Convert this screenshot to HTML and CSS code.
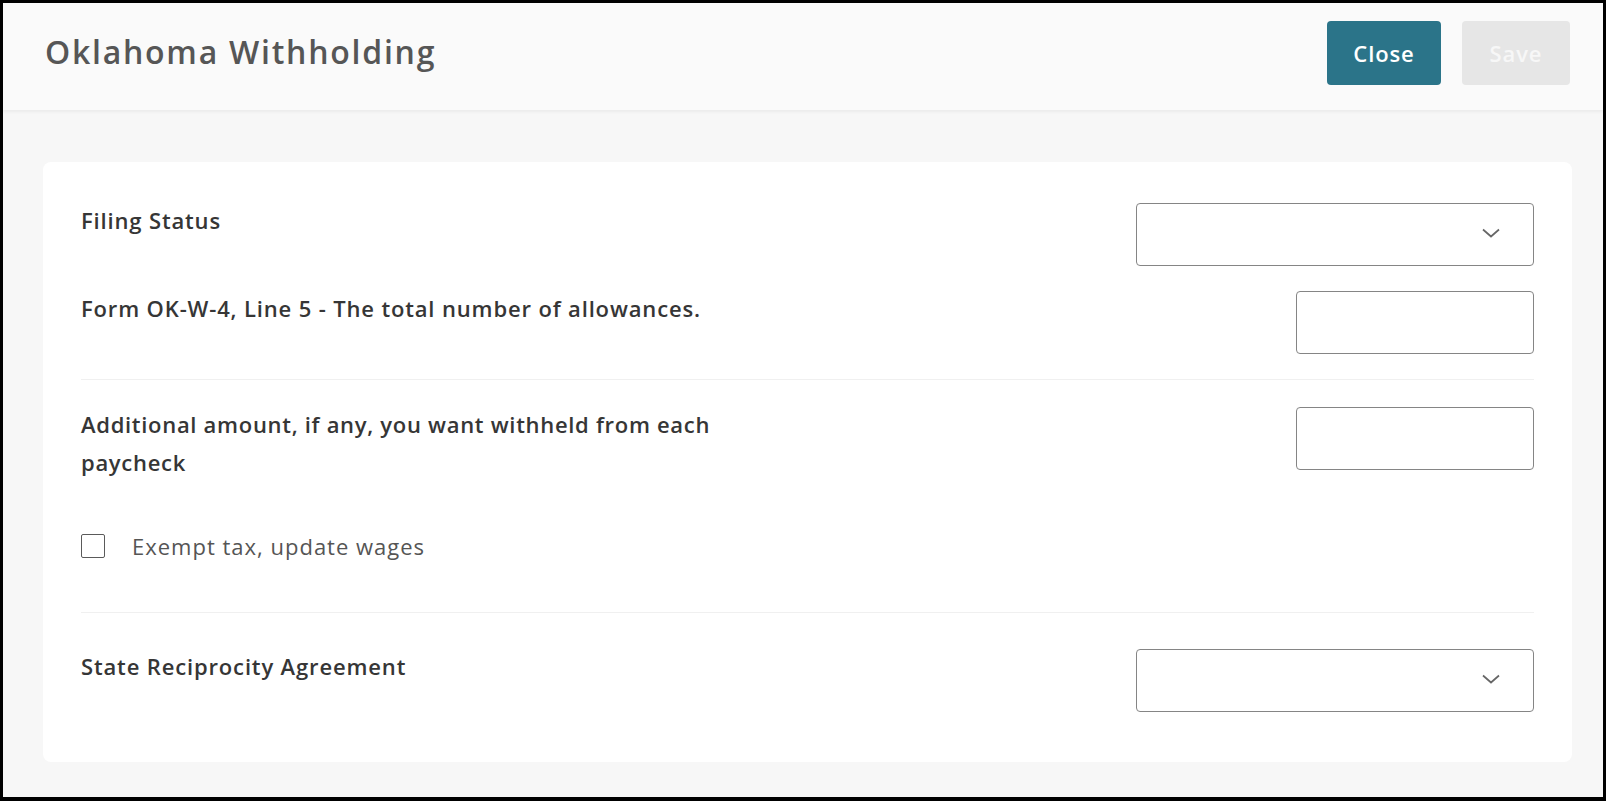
FILE: index.html
```html
<!DOCTYPE html>
<html lang="en">
<head>
<meta charset="utf-8">
<title>Oklahoma Withholding</title>
<link rel="stylesheet" href="styles.css">
</head>
<body>
<div class="frame">
  <header class="header">
    <h1 class="title">Oklahoma Withholding</h1>
    <div class="actions">
      <button class="btn btn-primary" type="button">Close</button>
      <button class="btn btn-disabled" type="button" disabled>Save</button>
    </div>
  </header>
  <main class="content">
    <section class="card">
      <div class="section section-first">
        <div class="row">
          <label class="label">Filing Status</label>
          <div class="select">
            <svg class="chevron" width="18" height="10" viewBox="0 0 18 10"><path d="M1 1.5 L9 8.5 L17 1.5" fill="none" stroke="#666666" stroke-width="1.7"/></svg>
          </div>
        </div>
        <div class="row row-gap">
          <label class="label">Form OK-W-4, Line 5 - The total number of allowances.</label>
          <div class="input"></div>
        </div>
      </div>
      <div class="section section-mid">
        <div class="row">
          <label class="label label-wrap">Additional amount, if any, you want withheld from each paycheck</label>
          <div class="input"></div>
        </div>
        <div class="check-row">
          <span class="checkbox"></span>
          <span class="check-label">Exempt tax, update wages</span>
        </div>
      </div>
      <div class="section section-last">
        <div class="row">
          <label class="label">State Reciprocity Agreement</label>
          <div class="select">
            <svg class="chevron" width="18" height="10" viewBox="0 0 18 10"><path d="M1 1.5 L9 8.5 L17 1.5" fill="none" stroke="#666666" stroke-width="1.7"/></svg>
          </div>
        </div>
      </div>
    </section>
  </main>
</div>
</body>
</html>
```

FILE: styles.css
```css
* { box-sizing: border-box; }

html, body {
  margin: 0;
  padding: 0;
  background: #000;
}

body {
  font-family: "Open Sans", "Liberation Sans", sans-serif;
}

.frame {
  width: 1606px;
  height: 801px;
  border: 3px solid #000;
  border-bottom-width: 4px;
  background: #f7f7f7;
  display: flex;
  flex-direction: column;
  overflow: hidden;
}

.header {
  height: 107px;
  flex: none;
  background: #fafafa;
  display: flex;
  align-items: flex-start;
  justify-content: space-between;
  padding: 0 33px 0 42px;
  box-shadow: 0 2px 3px rgba(0, 0, 0, 0.05);
  position: relative;
  z-index: 1;
}

.title {
  margin: 27px 0 0 0;
  font-size: 32px;
  line-height: 44px;
  font-weight: 600;
  color: #565656;
  letter-spacing: 1.75px;
}

.actions {
  display: flex;
  gap: 21px;
  margin-top: 18px;
}

.btn {
  height: 64px;
  border: none;
  border-radius: 4px;
  font-family: inherit;
  font-size: 22px;
  font-weight: 600;
  letter-spacing: 0.9px;
  padding: 0;
}

.btn-primary {
  width: 114px;
  background: #2b7489;
  color: #ffffff;
}

.btn-disabled {
  width: 108px;
  background: #e6e6e6;
  color: #f7f7f7;
}

.content {
  flex: 1;
  padding: 52px 31px 0 40px;
}

.card {
  background: #ffffff;
  border-radius: 8px;
  padding: 0 38px;
}

.section {
  border-bottom: 1px solid #f0f0f0;
}

.section-first {
  padding: 41px 0 25px;
}

.section-mid {
  padding: 27px 0 47px;
}

.section-last {
  border-bottom: none;
  padding: 36px 0 50px;
}

.row {
  display: flex;
  justify-content: space-between;
  align-items: flex-start;
}

.row-gap {
  margin-top: 25px;
}

.label {
  font-size: 22px;
  font-weight: 600;
  color: #363636;
  line-height: 38px;
  letter-spacing: 0.85px;
  margin-top: -2px;
}

.label-wrap {
  max-width: 660px;
  letter-spacing: 0.7px;
}

.select {
  width: 398px;
  height: 63px;
  border: 1px solid #858585;
  border-radius: 4px;
  display: flex;
  align-items: center;
  justify-content: flex-end;
  padding-right: 33px;
}

.chevron {
  display: block;
  margin-top: -4px;
}

.input {
  width: 238px;
  height: 63px;
  border: 1px solid #858585;
  border-radius: 4px;
}

.check-row {
  display: flex;
  align-items: center;
  margin-top: 46px;
  height: 38px;
}

.checkbox {
  width: 24px;
  height: 24px;
  border: 1.5px solid #5a5a5a;
  border-radius: 2px;
  margin-right: 27px;
}

.check-label {
  font-size: 22px;
  color: #555555;
  letter-spacing: 1px;
}
```
